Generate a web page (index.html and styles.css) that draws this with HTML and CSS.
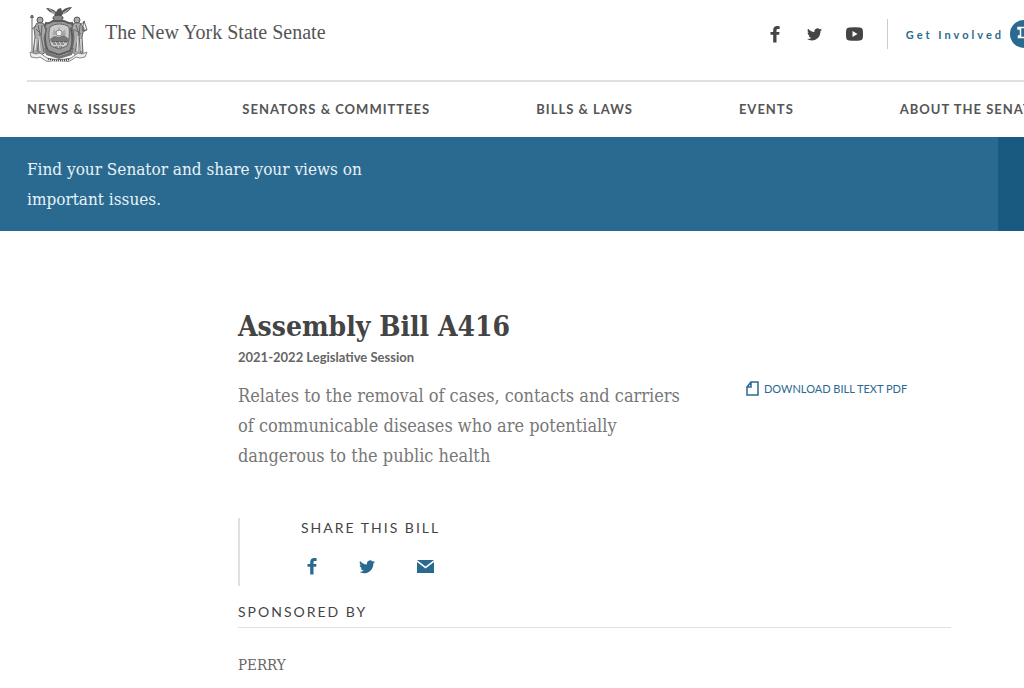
FILE: index.html
```html
<!DOCTYPE html>
<html lang="en">
<head>
    <meta charset="UTF-8">
    <meta name="viewport" content="width=device-width, initial-scale=1.0">
    <title>Assembly Bill A416 | The New York State Senate</title>
    <link rel="stylesheet" href="styles.css">
</head>
<body>
    <!-- Shared icons -->
    <svg class="sprite" aria-hidden="true">
        <symbol id="icon-facebook" viewBox="0 0 10 17">
            <path d="M9.6 0.2v2.9H7.9C6.8 3.1 6.5 3.7 6.5 4.5v1.4h3L9.1 8.8H6.5V16.6H3.2V8.8H0.5V5.9h2.7V4C3.2 1.4 4.8 0 7.2 0c1 0 1.9 0.1 2.4 0.2z"/>
        </symbol>
        <symbol id="icon-twitter" viewBox="0 0 24 20">
            <path d="M24 2.4c-.9.4-1.8.7-2.8.8 1-.6 1.8-1.6 2.2-2.7-1 .6-2 1-3.1 1.2A4.9 4.9 0 0 0 11.900 6.100C7.800 5.900 4.200 4 1.700.9 .4 3.200 1 6 3.200 7.500c-.8 0-1.600-.2-2.200-.6v.1c0 2.300 1.700 4.400 3.900 4.800-.7.200-1.500.2-2.200.1.600 2 2.400 3.400 4.600 3.400A9.900 9.900 0 0 1 0 17.300 13.900 13.900 0 0 0 7.500 19.500c9.100 0 14.300-7.700 14-14.600 1-.7 1.800-1.500 2.500-2.500z"/>
        </symbol>
    </svg>

    <header class="header">
        <div class="header-top">
            <a class="brand" href="#">
                <svg class="seal" viewBox="0 0 60 56" role="img" aria-label="State seal">
                    <!-- eagle and globe -->
                    <path d="M17 2c4 0 7 1 10 4l2-3 3-1 1 3c3-3 6-4 10-4-2 3-5 6-9 7l-3 3h-4l-2-3c-3-1-6-3-8-6z" fill="#555"/>
                    <path d="M20 3l6 4M22 6l4 2M40 3l-6 4M38 6l-4 2" stroke="#bbb" stroke-width="1"/>
                    <ellipse cx="29" cy="12" rx="5" ry="3" fill="#888" stroke="#444"/>
                    <!-- shield -->
                    <path d="M17 17c3 1 5-1 7-2h11c2 1 5 3 8 2l1 4-2 2c2 7 2 17-1 22l-11 4-11-4c-3-5-4-15-2-22l-2-2z" fill="#999" stroke="#5a5a5a" stroke-width="2"/>
                    <path d="M21 21c5-4 14-4 19 0 1 7 0 14-2 19l-8 3-8-3c-2-5-3-12-1-19z" fill="#ccc" stroke="#666"/>
                    <path d="M23 29l2-6 3 4 2-7 2 7 4-4 1 6z" fill="#aaa"/>
                    <circle cx="30" cy="27" r="3" fill="#eee" stroke="#888"/>
                    <path d="M21 33l4-3 5 1 5-2 5 4-1 3H22z" fill="#777"/>
                    <path d="M23 36h15M24 38h12M26 41h8" stroke="#555" stroke-dasharray="3 1"/>
                    <!-- Liberty -->
                    <circle cx="11" cy="14" r="3" fill="#aaa" stroke="#555"/>
                    <path d="M8 17h6l3 7-2 8 2 14-5 3-8-2 2-16-1-9z" fill="#aaa" stroke="#666"/>
                    <path d="M9 19l2 9-3 18M13 19l-1 11 3 16M7 23l6 6M10 31v16" stroke="#666" fill="none"/>
                    <path d="M10 30l1 15M7 33l-1 11" stroke="#eee"/>
                    <path d="M3 12v36M3 23l4-3" stroke="#666" fill="none"/>
                    <path d="M1 12h4l-1-3H2z" fill="#666"/>
                    <!-- Justice -->
                    <circle cx="48" cy="14" r="3" fill="#aaa" stroke="#555"/>
                    <path d="M45 17h6l4 5-2 9 1 16-7 2-4-3 2-15-2-9z" fill="#aaa" stroke="#666"/>
                    <path d="M47 19l3 9-4 18M51 19l-1 11 2 17M46 24l6 4" stroke="#666" fill="none"/>
                    <path d="M49 30l-1 15M52 33v12" stroke="#eee"/>
                    <path d="M51 19l5-4M55 15l-2 9h5l-3-9M45 23l-2 19" stroke="#666" fill="none"/>
                    <path d="M53 24h5l-3 2z" fill="#666"/>
                    <!-- ribbon -->
                    <path d="M15 42l7 5 8 3 9-3 6-5-2 7-13 4-13-4z" fill="#777"/>
                    <path d="M1 46l6 2 4-1 7 5c8 2 16 2 24 0l7-5 4 1 5-2-2 5-5 1-4-1-6 4c-8 2-16 2-24 0l-6-4-3 1-6-1z" fill="#eee" stroke="#888"/>
                    <path d="M19 53c7 2 15 2 22 0" stroke="#444" stroke-width="2" stroke-dasharray="1 1" fill="none"/>
                </svg>
                <span class="brand-name">The New York State Senate</span>
            </a>
            <div class="header-tools">
                <a class="social" href="#" aria-label="Facebook"><svg width="10" height="17"><use href="#icon-facebook"/></svg></a>
                <a class="social" href="#" aria-label="Twitter"><svg width="15" height="13"><use href="#icon-twitter"/></svg></a>
                <a class="social" href="#" aria-label="YouTube">
                    <svg width="17" height="14" viewBox="0 0 17 14">
                        <path fill-rule="evenodd" d="M3 .5Q8.500 0 14 .5 16.500.7 16.800 3 17.200 7 16.800 11 16.500 13.300 14 13.500 8.500 14 3 13.500.5 13.300.2 11-.2 7 .2 3 .5.7 3 .5zM6.500 4v6l5-3z"/>
                    </svg>
                </a>
                <a class="involved" href="#">
                    Get Involved
                    <svg width="28" height="28" viewBox="0 0 28 28" aria-hidden="true">
                        <circle cx="14" cy="14" r="14" fill="#2a6a90"/>
                        <path d="M8 7.500h12v10h-3v2.500l-3-2.500H8.500v-1.500h2v-7H8z" fill="none" stroke="#fff" stroke-width="1.500"/>
                    </svg>
                </a>
            </div>
        </div>
        <nav class="nav">
            <a href="#">News &amp; Issues</a>
            <a href="#">Senators &amp; Committees</a>
            <a href="#">Bills &amp; Laws</a>
            <a href="#">Events</a>
            <a href="#">About the Senate</a>
        </nav>
    </header>

    <section class="banner">
        <p>Find your Senator and share your views on important issues.</p>
        <div class="banner-action"></div>
    </section>

    <main class="bill">
        <h1>Assembly Bill A416</h1>
        <p class="session">2021-2022 Legislative Session</p>
        <div class="summary">
            <p class="description">Relates to the removal of cases, contacts and carriers of communicable diseases who are potentially dangerous to the public health</p>
            <a class="download" href="#">
                <svg width="13" height="15" viewBox="0 0 13 15" aria-hidden="true">
                    <path d="M5 1h7v13H1V6h4z M5 1L1 6" fill="none" stroke="#2a6a90" stroke-width="1.500"/>
                </svg>
                Download Bill Text PDF
            </a>
        </div>

        <section class="share">
            <h2>Share this bill</h2>
            <div class="share-links">
                <a href="#" aria-label="Share on Facebook"><svg width="10" height="17"><use href="#icon-facebook"/></svg></a>
                <a href="#" aria-label="Share on Twitter"><svg width="16" height="14"><use href="#icon-twitter"/></svg></a>
                <a href="#" aria-label="Share by email">
                    <svg width="17" height="13" viewBox="0 0 17 13">
                        <path d="M0 0h17L8.500 6.500z M0 2l8.500 6.500L17 2v11H0z"/>
                    </svg>
                </a>
            </div>
        </section>

        <section class="sponsor">
            <h2>Sponsored by</h2>
            <p>PERRY</p>
        </section>
    </main>
</body>
</html>
```
FILE: styles.css
```css
* {
    box-sizing: border-box;
}

body {
    margin: 0;
    font-family: Lato, "Liberation Sans", sans-serif;
    background-color: #fff;
    color: #444;
    overflow-x: hidden;
}

h1, h2, p {
    margin: 0;
}

a {
    color: inherit;
    text-decoration: none;
}

svg {
    display: block;
    fill: currentColor;
}

.sprite {
    display: none;
}

.header {
    padding-left: 27px;
    overflow: hidden;
}

.header-top {
    display: flex;
    justify-content: space-between;
    height: 82px;
    padding-top: 6px;
    border-bottom: 2px solid #e0e0e0;
}

.brand {
    display: flex;
    align-items: flex-start;
    gap: 16px;
    padding-left: 2px;
    color: #555;
}

.seal {
    width: 60px;
    height: 56px;
}

.brand-name {
    font-family: "Liberation Serif", serif;
    font-size: 20px;
    line-height: 52px;
}

.header-tools {
    display: flex;
    align-items: center;
    height: 56px;
    margin-right: -14px;
}

.social {
    display: flex;
    justify-content: center;
    width: 40px;
}

.involved {
    display: flex;
    align-items: center;
    gap: 6px;
    height: 30px;
    margin-left: 12px;
    padding-left: 18px;
    border-left: 1px solid #ccc;
    color: #2a6a90;
    font-size: 11px;
    font-weight: 700;
    letter-spacing: 3px;
}

.nav {
    display: flex;
    gap: 106px;
    height: 55px;
    color: #555;
    font-size: 13px;
    font-weight: 700;
    line-height: 55px;
    letter-spacing: 1px;
    text-transform: uppercase;
    white-space: nowrap;
}

.banner {
    display: flex;
    justify-content: space-between;
    background-color: #2a6a90;
    color: #e8f2f7;
}

.banner p {
    max-width: 400px;
    padding: 17px 0 17px 27px;
    font-family: "DejaVu Serif Condensed", "DejaVu Serif", serif;
    font-size: 17px;
    line-height: 30px;
}

.banner-action {
    width: 26px;
    background-color: #185a80;
}

.bill {
    padding: 76px 73px 0 238px;
}

.bill h1 {
    font-family: "DejaVu Serif Condensed", "DejaVu Serif", serif;
    font-size: 28px;
    line-height: 40px;
}

.session {
    color: #666;
    font-size: 13px;
    font-weight: 700;
    line-height: 20px;
}

.summary {
    display: flex;
    justify-content: space-between;
    padding-top: 14px;
}

.description {
    flex: 0 1 456px;
    color: #777;
    font-family: "DejaVu Serif Condensed", "DejaVu Serif", serif;
    font-size: 18px;
    line-height: 30px;
}

.download {
    display: flex;
    gap: 5px;
    flex: 0 0 205px;
    color: #2a6a90;
    font-size: 11px;
    line-height: 15px;
    text-transform: uppercase;
}

.bill h2 {
    font-size: 14px;
    font-weight: 400;
    line-height: 20px;
    letter-spacing: 2px;
    text-transform: uppercase;
}

.share {
    margin-top: 47px;
    padding-left: 61px;
    border-left: 2px solid #e0e0e0;
}

.share-links {
    display: flex;
    align-items: center;
    gap: 42px;
    padding: 20px 0 11px 6px;
    color: #2a6a90;
}

.sponsor {
    margin-top: 16px;
}

.sponsor h2 {
    padding-bottom: 5px;
    border-bottom: 1px solid #e0e0e0;
}

.sponsor p {
    padding-top: 26px;
    color: #666;
    font-family: "DejaVu Serif Condensed", "DejaVu Serif", serif;
    font-size: 15px;
    line-height: 22px;
}
```
